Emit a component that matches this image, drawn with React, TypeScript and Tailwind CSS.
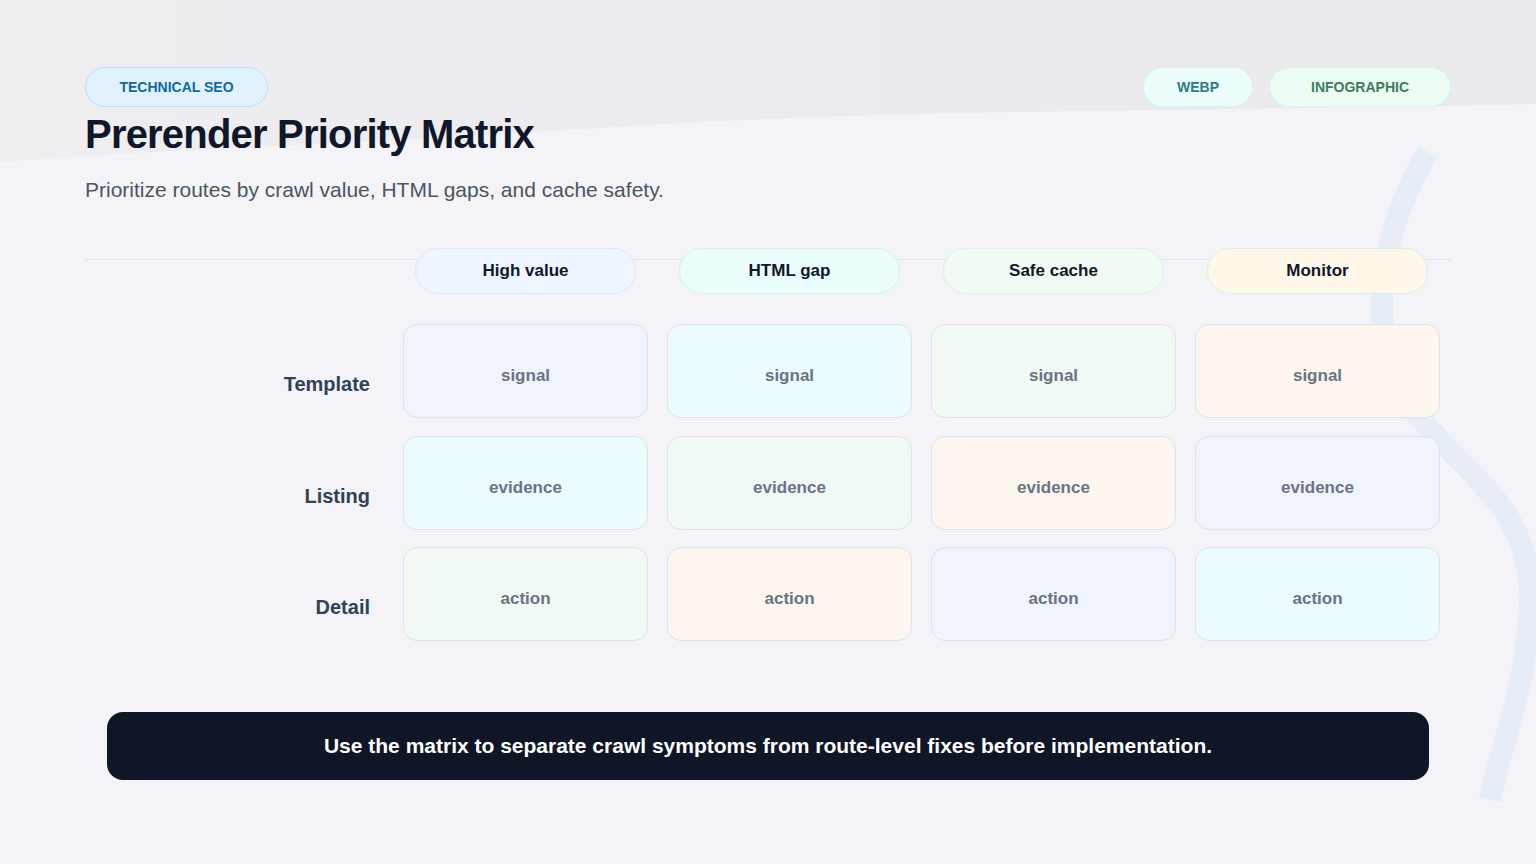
import React from 'react';

type Tone = 'blue' | 'cyan' | 'green' | 'orange';

const cellTone: Record<Tone, string> = {
  blue: 'bg-[#eff4fd]/90',
  cyan: 'bg-[#ebfcfd]/90',
  green: 'bg-[#eff9f2]/90',
  orange: 'bg-[#fef6ec]/90',
};

const columns: { label: string; cls: string }[] = [
  { label: 'High value', cls: 'bg-[#eef5fe] border-[#dbe8f8]' },
  { label: 'HTML gap', cls: 'bg-[#ebfcfd] border-[#cdf3f3]' },
  { label: 'Safe cache', cls: 'bg-[#effbf3] border-[#d8f3e3]' },
  { label: 'Monitor', cls: 'bg-[#fef7ea] border-[#d3f1ea]' },
];

const rows: { label: string; value: string; tones: Tone[] }[] = [
  { label: 'Template', value: 'signal', tones: ['blue', 'cyan', 'green', 'orange'] },
  { label: 'Listing', value: 'evidence', tones: ['cyan', 'green', 'orange', 'blue'] },
  { label: 'Detail', value: 'action', tones: ['green', 'orange', 'blue', 'cyan'] },
];

const Backdrop = () => (
  <svg className="absolute inset-0 pointer-events-none" width="1536" height="864" viewBox="0 0 1536 864">
    <defs>
      <linearGradient id="band" x1="0" y1="0" x2="1" y2="0">
        <stop offset="0" stopColor="#eeeef1" />
        <stop offset="1" stopColor="#e9e9ee" />
      </linearGradient>
    </defs>
    <path d="M0 0 H1536 V104 C1200 112 900 108 600 128 C380 142 160 150 0 162 Z" fill="url(#band)" />
    <path
      d="M1428 152 C1385 222 1358 330 1412 408 C1455 468 1535 505 1530 605 C1526 690 1502 740 1490 800"
      fill="none"
      stroke="#e1ebf7"
      strokeWidth="22"
      strokeLinecap="butt"
      opacity="0.75"
    />
  </svg>
);

export default function App() {
  return (
    <div className="relative w-full h-[864px] overflow-hidden bg-[#f3f3f8] font-['Liberation_Sans',Arial,sans-serif]">
      <Backdrop />

      <div className="relative px-[85px] pt-[67px]">
        {/* Top row: tags */}
        <div className="flex items-start justify-between">
          <div className="h-[40px] w-[183px] rounded-full border border-[#b9e0f8] bg-[#e0f2fe] flex items-center justify-center text-[14px] font-bold text-[#12699c]">
            TECHNICAL SEO
          </div>
          <div className="flex gap-4">
            <div className="h-[40px] w-[110px] rounded-full border border-[#d3f5f7] bg-[#ecfdfe] flex items-center justify-center text-[14px] font-bold text-[#2d7b7a]">
              WEBP
            </div>
            <div className="h-[40px] w-[182px] rounded-full border border-[#d7f6e6] bg-[#edfcf3] flex items-center justify-center text-[14px] font-bold text-[#3a7d5b]">
              INFOGRAPHIC
            </div>
          </div>
        </div>

        <h1 className="mt-[3px] text-[40px] leading-[48px] font-bold tracking-[-0.02em] text-[#0f172a]">
          Prerender Priority Matrix
        </h1>
        <p className="mt-[18px] text-[21px] leading-[28px] text-[#4b5563]">
          Prioritize routes by crawl value, HTML gaps, and cache safety.
        </p>

        {/* Column headers */}
        <div className="relative mt-[44px] grid grid-cols-[299px_repeat(4,245px)] gap-x-[19px] h-[46px]">
          <div className="absolute left-0 top-[11px] h-px w-[1366px] bg-[#dae6f2]" />
          <div />
          {columns.map((c) => (
            <div
              key={c.label}
              className={`relative mx-3 h-[46px] rounded-full border flex items-center justify-center text-[17px] font-bold text-[#0f172a] ${c.cls}`}
            >
              {c.label}
            </div>
          ))}
        </div>

        {/* Rows */}
        <div className="mt-[30px] grid grid-cols-[299px_repeat(4,245px)] gap-x-[19px] gap-y-[17.5px]">
          {rows.map((r) => (
            <React.Fragment key={r.label}>
              <div className="h-[94px] flex items-center justify-end pr-[14px] pt-[26px] text-[20px] font-bold text-[#334155]">
                {r.label}
              </div>
              {r.tones.map((t, i) => (
                <div
                  key={i}
                  className={`h-[94px] rounded-[14px] border border-[#dce2ea] flex items-center justify-center pt-[10px] text-[17px] font-bold text-[#6a7386] ${cellTone[t]}`}
                >
                  {r.value}
                </div>
              ))}
            </React.Fragment>
          ))}
        </div>

        <div className="mt-[71px] mx-[22px] h-[68px] rounded-[16px] bg-[#0e1628] flex items-center justify-center text-[21px] font-bold text-white">
          Use the matrix to separate crawl symptoms from route-level fixes before implementation.
        </div>
      </div>
    </div>
  );
}
